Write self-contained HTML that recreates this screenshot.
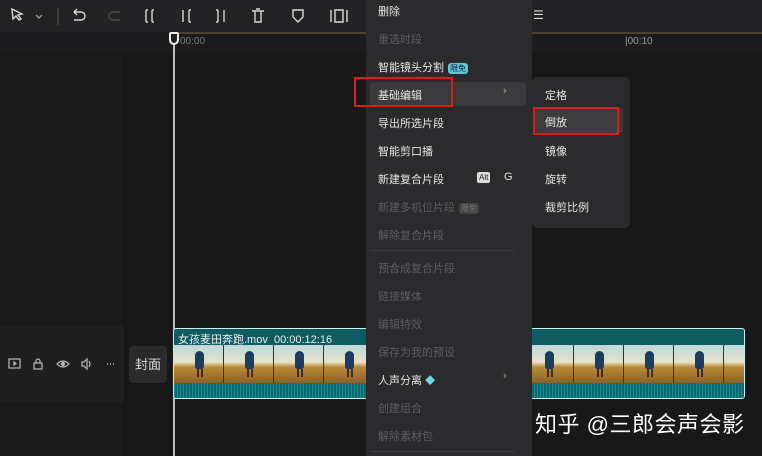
<!DOCTYPE html>
<html><head><meta charset="utf-8"><style>
*{margin:0;padding:0;box-sizing:border-box}
body{width:762px;height:456px;background:#181818;position:relative;overflow:hidden;font-family:"Liberation Sans","Noto Sans CJK SC",sans-serif;color:#e8e8e8}
.abs{position:absolute}
.tb{left:0;top:0;width:762px;height:32px;background:#232326}
.ruler{left:0;top:32px;width:762px;height:20px;background:#1c1c1e}
.menu{left:366px;top:0;width:166px;height:456px;background:#2b2b2e}
.mi{position:absolute;left:12px;font-size:11px;color:#e6e6e6;white-space:nowrap}
.dis{color:#5e5e62}
.sub{left:532px;top:77px;width:98px;height:151px;background:#2b2b2e;border-radius:6px}
.si{position:absolute;left:13px;font-size:11px;color:#e6e6e6}
.tag{display:inline-block;font-size:8px;padding:0 2px;border-radius:3px;background:#5fc5d8;color:#123;margin-left:4px;line-height:11px}
.clip{left:173px;top:328px;width:572px;height:71px;border:1.5px solid #cfeff0;border-radius:3px;background:#0d5c62;overflow:hidden}
.th{position:absolute;top:16px;width:50px;height:38px;background:linear-gradient(#bcd8dc 0%,#e8e2c8 45%,#b88a3a 58%,#8d6222 100%);border-right:1px solid #3a3020}
.fig{position:absolute;left:21px;top:6px;width:9px;height:18px;background:#1d3a60;border-radius:5px 5px 3px 3px}
.fig:after{content:"";position:absolute;left:2px;top:18px;width:2px;height:8px;background:#3a3020;box-shadow:4px 0 #3a3020}
.wave{position:absolute;left:0;top:54px;width:100%;height:17px;background:repeating-linear-gradient(90deg,#1a8a94 0 1px,#0e6a72 1px 3px)}
</style></head><body>
<div class="abs tb"></div>
<div class="abs ruler"></div>
<div class="abs" style="left:0;top:52px;width:123px;height:404px;background:#1a1a1a"></div>
<div class="abs" style="left:0;top:326px;width:124px;height:76px;background:#1f1f1f"></div>
<div class="abs" style="left:124px;top:52px;width:1px;height:404px;background:#151515"></div>
<svg class="abs" style="left:0;top:0" width="366" height="32" fill="none" stroke="#d8d8d8" stroke-width="1.4">
<path d="M12 9l10 5-4 1 3 4-2 1-3-4-3 3z"/><path d="M36 15l3 3 3-3" stroke="#999"/>
<line x1="58" y1="8" x2="58" y2="25" stroke="#444"/>
<path d="M74 12h7a4 4 0 010 8h-7M74 12l3-3M74 12l3 3"/>
<path d="M120 12h-7a4 4 0 000 8h7" stroke="#4a4a4a"/>
<path d="M146 10v12M152 10v12M146 10h2M146 22h2M152 10h2M152 22h2"/>
<path d="M183 10v12M189 10v12M189 10h2M189 22h2M183 14v2M183 18v2" />
<path d="M218 10v12M224 10v12M216 10h2M216 22h2M224 14v2"/>
<path d="M252 11h12M255 11v11h6v-11M256 9h4"/>
<path d="M293 10h10v7l-5 5-5-5z"/>
<path d="M331 10v12M335 10h8v12h-8zM347 10v12"/>
</svg>
<div class="abs" style="left:533px;top:8px;font-size:12px;color:#ddd">☰</div>
<div class="abs" style="left:175px;top:32px;width:587px;height:2px;background:#4a4330"></div>
<div class="abs" style="left:180px;top:36px;font-size:10px;color:#777">00:00</div>
<div class="abs" style="left:625px;top:36px;font-size:10px;color:#999">|00:10</div>
<div class="abs" style="left:173px;top:34px;width:2px;height:422px;background:#bbb"></div>
<div class="abs" style="left:169px;top:32px;width:10px;height:13px;border:2px solid #eee;border-radius:2px 2px 5px 5px;background:#222"></div>
<svg class="abs" style="left:0;top:350px" width="124" height="28" fill="none" stroke="#bbb" stroke-width="1.2">
<rect x="9" y="9" width="11" height="9"/><path d="M14 12l2 1.5-2 1.5z" fill="#bbb"/>
<rect x="34" y="13" width="8" height="6"/><path d="M36 13v-2a2 2 0 014 0v2"/>
<path d="M57 14q6-6 12 0q-6 6-12 0z"/><circle cx="63" cy="14" r="1.5" fill="#bbb"/>
<path d="M82 12h2l3-3v10l-3-3h-2zM89 11q2 3 0 6"/>
<path d="M107 14h1M110 14h1M113 14h1" stroke-width="1.6"/>
</svg>
<div class="abs" style="left:129px;top:346px;width:38px;height:37px;background:#2b2b2b;border-radius:4px;font-size:13px;color:#ddd;text-align:center;line-height:37px">封面</div>
<div class="abs clip">
<div style="position:absolute;left:4px;top:2px;font-size:11px;color:#eee;white-space:nowrap">女孩麦田奔跑.mov&nbsp; 00:00:12:16</div>
<div class="th" style="left:0"><div class="fig"></div></div>
<div class="th" style="left:50px"><div class="fig"></div></div>
<div class="th" style="left:100px"><div class="fig"></div></div>
<div class="th" style="left:150px"><div class="fig"></div></div>
<div class="th" style="left:200px"><div class="fig"></div></div>
<div class="th" style="left:250px"><div class="fig"></div></div>
<div class="th" style="left:300px"><div class="fig"></div></div>
<div class="th" style="left:350px"><div class="fig"></div></div>
<div class="th" style="left:400px"><div class="fig"></div></div>
<div class="th" style="left:450px"><div class="fig"></div></div>
<div class="th" style="left:500px"><div class="fig"></div></div>
<div class="th" style="left:550px"><div class="fig"></div></div>
<div class="wave"></div>
</div>
<div class="abs menu">
<div class="mi" style="top:3px">删除</div>
<div class="mi dis" style="top:31px">重选时段</div>
<div class="mi" style="top:59px">智能镜头分割<span class="tag">限免</span></div>
<div class="abs" style="left:4px;top:82px;width:156px;height:24px;background:#3a3a3d;border-radius:3px"></div>
<div class="mi" style="top:87px">基础编辑</div>
<div class="mi" style="top:85px;left:137px;color:#aaa">›</div>
<div class="abs" style="left:-12px;top:77px;width:99px;height:30px;border:2px solid #d81e1e"></div>
<div class="mi" style="top:115px">导出所选片段</div>
<div class="mi" style="top:143px">智能剪口播</div>
<div class="mi" style="top:171px">新建复合片段</div>
<div class="abs" style="left:111px;top:172px;font-size:8px;background:#ddd;color:#222;padding:0 2px;border-radius:2px;line-height:11px">Alt</div>
<div class="mi" style="top:171px;left:138px">G</div>
<div class="mi dis" style="top:199px">新建多机位片段<span class="tag" style="background:#444;color:#777">限免</span></div>
<div class="mi dis" style="top:227px">解除复合片段</div>
<div class="abs" style="left:4px;top:250px;width:144px;height:1px;background:#3c3c3f"></div>
<div class="mi dis" style="top:260px">预合成复合片段</div>
<div class="mi dis" style="top:288px">链接媒体</div>
<div class="mi dis" style="top:316px">编辑特效</div>
<div class="mi dis" style="top:344px">保存为我的预设</div>
<div class="mi" style="top:372px">人声分离 <span style="color:#6fd8ec;font-size:10px">◆</span></div>
<div class="mi" style="top:370px;left:137px;color:#aaa">›</div>
<div class="mi dis" style="top:400px">创建组合</div>
<div class="mi dis" style="top:428px">解除素材包</div>
<div class="abs" style="left:4px;top:451px;width:144px;height:1px;background:#3c3c3f"></div>
</div>
<div class="abs sub">
<div class="si" style="top:10px">定格</div>
<div class="abs" style="left:3px;top:31px;width:88px;height:25px;background:#3c3c3f;border-radius:3px"></div>
<div class="si" style="top:37px">倒放</div>
<div class="abs" style="left:1px;top:30px;width:86px;height:28px;border:2px solid #d81e1e"></div>
<div class="si" style="top:66px">镜像</div>
<div class="si" style="top:94px">旋转</div>
<div class="si" style="top:122px">裁剪比例</div>
</div>
<div class="abs" style="left:535px;top:407px;font-size:22px;color:#fff;white-space:nowrap;letter-spacing:0.5px">知乎 @三郎会声会影</div>
</body></html>
